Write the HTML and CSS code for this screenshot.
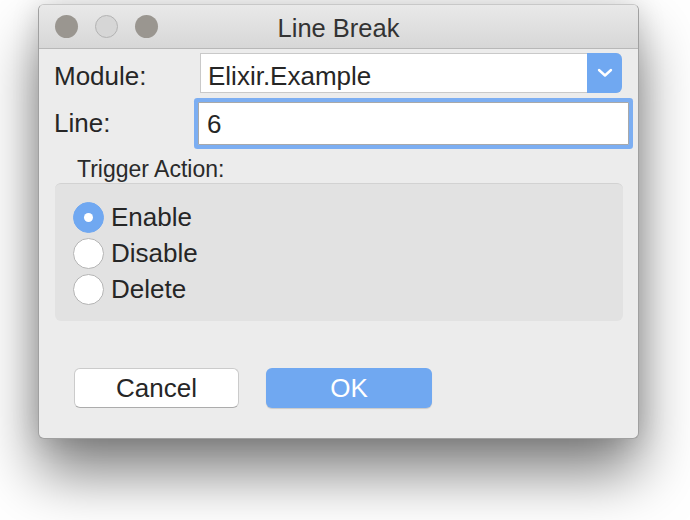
FILE: index.html
```html
<!DOCTYPE html>
<html>
<head>
<meta charset="utf-8">
<link rel="stylesheet" href="styles.css">
</head>
<body>
<div class="stage">
  <div class="window">
    <div class="titlebar">
      <div class="lights">
        <span class="light"></span>
        <span class="light light-off"></span>
        <span class="light"></span>
      </div>
      <div class="title">Line Break</div>
    </div>
    <div class="content">
      <div class="row row-module">
        <div class="label label-module">Module:</div>
        <div class="select">
          <div class="select-text">Elixir.Example</div>
          <div class="select-btn">
            <svg width="16" height="10" viewBox="0 0 16 10"><polyline points="2,2 8,7.5 14,2" fill="none" stroke="#fff" stroke-width="2.4" stroke-linecap="round" stroke-linejoin="round"/></svg>
          </div>
        </div>
      </div>
      <div class="row row-line">
        <div class="label">Line:</div>
        <div class="input">6</div>
      </div>
      <div class="group-title">Trigger Action:</div>
      <div class="group">
        <div class="radio-row"><span class="radio radio-on"></span><span class="radio-label">Enable</span></div>
        <div class="radio-row"><span class="radio"></span><span class="radio-label">Disable</span></div>
        <div class="radio-row"><span class="radio"></span><span class="radio-label">Delete</span></div>
      </div>
      <div class="buttons">
        <div class="btn btn-cancel">Cancel</div>
        <div class="btn btn-ok">OK</div>
      </div>
    </div>
  </div>
</div>
</body>
</html>
```
FILE: styles.css
```css
html, body {
  margin: 0;
  padding: 0;
  background: #ffffff;
  width: 690px;
  height: 520px;
  overflow: hidden;
}
body {
  font-family: "Liberation Sans", Arial, sans-serif;
  color: #262626;
}
.stage {
  padding: 4px 0 0 38px;
}
.window {
  width: 601px;
  height: 435px;
  box-sizing: border-box;
  border: 1px solid #a0a0a0;
  border-top-color: #c8c8c8;
  border-radius: 6px;
  background: #ececec;
  overflow: hidden;
  box-shadow: 0 34px 58px rgba(0,0,0,0.5), 0 0 28px rgba(0,0,0,0.14);
  display: flex;
  flex-direction: column;
}
.titlebar {
  height: 43px;
  flex: none;
  background: linear-gradient(#e9e9e9, #d7d7d7);
  border-bottom: 1px solid #b8b8b8;
  display: flex;
  align-items: center;
  position: relative;
}
.lights {
  display: flex;
  gap: 17px;
  padding-left: 16px;
}
.light {
  width: 23px;
  height: 23px;
  border-radius: 50%;
  background: #9a9690;
  box-sizing: border-box;
}
.light-off {
  background: #d6d6d6;
  border: 1px solid #b3b3b3;
}
.title {
  position: absolute;
  left: 0;
  right: 0;
  top: 0;
  line-height: 46px;
  text-align: center;
  font-size: 25.5px;
  color: #333;
}
.content {
  padding: 4px 0 0 15px;
  display: flex;
  flex-direction: column;
  font-size: 26px;
}
.row {
  display: flex;
  align-items: center;
}
.label {
  width: 146px;
  flex: none;
  font-size: 26px;
}
.row-module {
  height: 40px;
  align-items: flex-start;
}
.label-module {
  line-height: 46px;
}
.select {
  width: 422px;
  height: 40px;
  box-sizing: border-box;
  display: flex;
  background: #fff;
  border: 1px solid #c9c9c9;
  border-right: none;
  border-radius: 0 6px 6px 0;
}
.select-text {
  flex: 1;
  padding: 6px 0 0 7px;
  line-height: 32px;
}
.select-btn {
  width: 35px;
  margin: -1px 0;
  background: #70a8f1;
  border-radius: 0 6px 6px 0;
  display: flex;
  align-items: center;
  justify-content: center;
}
.row-line {
  margin-top: 9px;
  height: 43px;
}
.input {
  margin-left: -2px;
  width: 431px;
  height: 43px;
  box-sizing: border-box;
  background: #fff;
  border: 1px solid #a9a9a9;
  box-shadow: 0 0 0 4px #7caef2;
  border-radius: 1px;
  padding-left: 8px;
  line-height: 43px;
}
.group-title {
  margin-top: 11px;
  padding-left: 23px;
  font-size: 23px;
  line-height: 26px;
  color: #2a2a2a;
}
.group {
  margin-top: 1px;
  margin-left: 1px;
  width: 568px;
  box-sizing: border-box;
  background: #e2e2e2;
  border-top: 1px solid #d2d2d2;
  border-radius: 6px;
  padding: 15px 0 14px 18px;
}
.radio-row {
  display: flex;
  align-items: center;
  height: 36px;
  gap: 7px;
}
.radio {
  width: 31px;
  height: 31px;
  box-sizing: border-box;
  border-radius: 50%;
  background: #fff;
  border: 1px solid #b4b4b4;
  display: flex;
  align-items: center;
  justify-content: center;
}
.radio-on {
  background: #70a8f1;
  border-color: #70a8f1;
}
.radio-on::after {
  content: "";
  width: 9px;
  height: 9px;
  border-radius: 50%;
  background: #fff;
}
.radio-label {
  line-height: 36px;
}
.buttons {
  display: flex;
  gap: 27px;
  margin-top: 47px;
  padding-left: 20px;
}
.btn {
  width: 165px;
  height: 40px;
  box-sizing: border-box;
  border-radius: 6px;
  text-align: center;
  line-height: 40px;
  font-size: 26px;
}
.btn-cancel {
  background: #fff;
  border: 1px solid #cbcbcb;
  border-bottom-color: #acacac;
  line-height: 38px;
}
.btn-ok {
  width: 166px;
  background: #70a8f1;
  color: #fff;
  box-shadow: 0 1px 1px rgba(0,0,0,0.15);
}
```
